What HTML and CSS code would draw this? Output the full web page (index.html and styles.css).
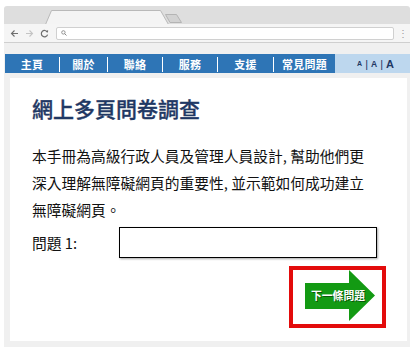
FILE: index.html
```html
<!DOCTYPE html>
<html lang="zh-Hant">
<head>
<meta charset="utf-8">
<title>網上多頁問卷調查</title>
<link rel="stylesheet" href="styles.css">
</head>
<body>
<div class="window">
  <div class="tabstrip">
    <svg class="tabs" width="150" height="18" viewBox="0 0 150 18">
      <polygon points="125.5,8.5 136.5,8.5 141.5,16.5 130,16.5" fill="#d2d2d2" stroke="#b4b4b4" stroke-width="1"/>
      <polygon points="5.5,18.5 11.5,4.5 120.5,4.5 128.5,18.5" fill="#f4f4f4" stroke="#b9b9b9" stroke-width="1"/>
    </svg>
  </div>
  <div class="toolbar">
    <svg class="ico" width="9" height="9" viewBox="0 0 9 9"><path d="M8 4.5H1.5M4.5 1.5L1.5 4.5L4.5 7.5" fill="none" stroke="#6e6e6e" stroke-width="1.1"/></svg>
    <svg class="ico" width="9" height="9" viewBox="0 0 9 9"><path d="M1 4.5H7.5M4.5 1.5L7.5 4.5L4.5 7.5" fill="none" stroke="#c4c4c4" stroke-width="1.1"/></svg>
    <svg class="ico" width="9" height="9" viewBox="0 0 9 9"><path d="M7.4 3.2A3.2 3.2 0 1 0 7.6 5.6" fill="none" stroke="#6e6e6e" stroke-width="1.2"/><path d="M5.6 2.6L8 3.6L8.1 1.1Z" fill="#6e6e6e"/></svg>
    <div class="address">
      <svg width="6" height="6" viewBox="0 0 6 6"><circle cx="2.4" cy="2.4" r="1.7" fill="none" stroke="#888" stroke-width="0.9"/><path d="M3.6 3.6L5.5 5.5" stroke="#888" stroke-width="1"/></svg>
    </div>
    <span class="menu">⋮</span>
  </div>
  <div class="page">
    <nav class="nav">
      <a class="item first">主頁</a>
      <a class="item">關於</a>
      <a class="item">聯絡</a>
      <a class="item">服務</a>
      <a class="item">支援</a>
      <a class="item">常見問題</a>
      <div class="sizes"><span class="s1">A</span><span class="bar">|</span><span class="s2">A</span><span class="bar">|</span><span class="s3">A</span></div>
    </nav>
    <main class="card">
      <h1 class="title">網上多頁問卷調查</h1>
      <p class="intro">本手冊為高級行政人員及管理人員設計, 幫助他們更<br>深入理解無障礙網頁的重要性, 並示範如何成功建立<br>無障礙網頁。</p>
      <div class="question">
        <label class="qlabel" for="q1">問題 1:</label>
        <input class="qinput" id="q1" type="text">
      </div>
      <div class="actions">
        <div class="focusbox">
          <svg class="arrow" width="89" height="54" viewBox="0 0 89 54">
            <polygon points="12,13 56,13 56,0 82,25.5 56,51 56,39 12,39" fill="#139a13"/>
          </svg>
          <span class="next">下一條問題</span>
        </div>
      </div>
    </main>
  </div>
</div>
</body>
</html>
```

FILE: styles.css
```css
* { box-sizing: border-box; }
html, body { margin: 0; padding: 0; background: #ffffff; }
body { font-family: "Noto Sans CJK TC", "Noto Sans", sans-serif; color: #111; }

.window { margin: 6px 9px 0 4px; width: 406px; }

.tabstrip {
  height: 18px;
  background: #dedede;
  border-radius: 3px 3px 0 0;
  padding-left: 36px;
}
.tabs { display: block; }

.toolbar {
  height: 19px;
  background: #f5f5f5;
  border-bottom: 1px solid #cfcfcf;
  display: flex;
  align-items: center;
  padding: 0 4px 0 6px;
}
.ico { display: block; margin-right: 6px; }
.address {
  flex: 1;
  height: 13px;
  margin-left: 1px;
  margin-right: 4px;
  background: #fff;
  border: 1px solid #d0d0d0;
  border-radius: 2px;
  display: flex;
  align-items: center;
  padding-left: 4px;
}
.address svg { display: block; }
.menu { font-size: 10px; color: #999; line-height: 1; width: 8px; text-align: center; }

.page {
  background: #f0f0f0;
  padding: 11px 0 6px 1px;
}

.nav {
  display: grid;
  grid-template-columns: 54px 48px 55px 55px 56px 62px 1fr;
  height: 19px;
  background: #2e75b6;
}
.item {
  color: #fff;
  font-weight: bold;
  font-size: 11px;
  text-align: center;
  height: 15px;
  line-height: 15px;
  margin-top: 3px;
  border-left: 1px solid #fff;
  letter-spacing: 0.2px;
}
.item.first { border-left: 0; }
.sizes {
  background: #bdd7ee;
  color: #1f3864;
  font-family: "Liberation Sans", Arial, sans-serif;
  font-weight: bold;
  display: flex;
  align-items: center;
  justify-content: center;
  gap: 3px;
  padding-left: 6px;
}
.s1 { font-size: 7px; }
.s2 { font-size: 8.5px; }
.s3 { font-size: 11px; }
.bar { font-size: 11px; font-weight: normal; }

.card {
  background: #fff;
  margin: 5px 3px 0 5px;
  height: 263px;
  padding: 18px 21px 0 22px;
}
.title {
  margin: 0;
  font-size: 21px;
  line-height: 25px;
  font-weight: 500;
  color: #1f3864;
  -webkit-text-stroke: 0.35px #1f3864;
}
.intro {
  margin: 21px 0 0;
  font-size: 14.75px;
  line-height: 27px;
  color: #111;
  white-space: nowrap;
}
.question {
  display: flex;
  align-items: center;
  margin-top: 4px;
}
.qlabel {
  width: 87px;
  font-size: 14.75px;
  color: #111;
}
.qinput {
  width: 258px;
  height: 31px;
  border: 1px solid #000;
  margin: 0;
  padding: 0;
  box-shadow: 1px 1px 2px rgba(0,0,0,0.35);
  background: #fff;
}
.actions {
  display: flex;
  justify-content: flex-end;
  margin-top: 8px;
}
.focusbox {
  position: relative;
  border: 4px solid #e30b0b;
  width: 97px;
  height: 62px;
}
.arrow { display: block; }
.next {
  position: absolute;
  left: 17px;
  top: 17px;
  width: 56px;
  text-align: center;
  color: #fff;
  font-size: 10.8px;
  font-weight: bold;
  line-height: 17px;
  text-shadow: 1px 1px 0 rgba(0,0,0,0.45);
  white-space: nowrap;
}
```
